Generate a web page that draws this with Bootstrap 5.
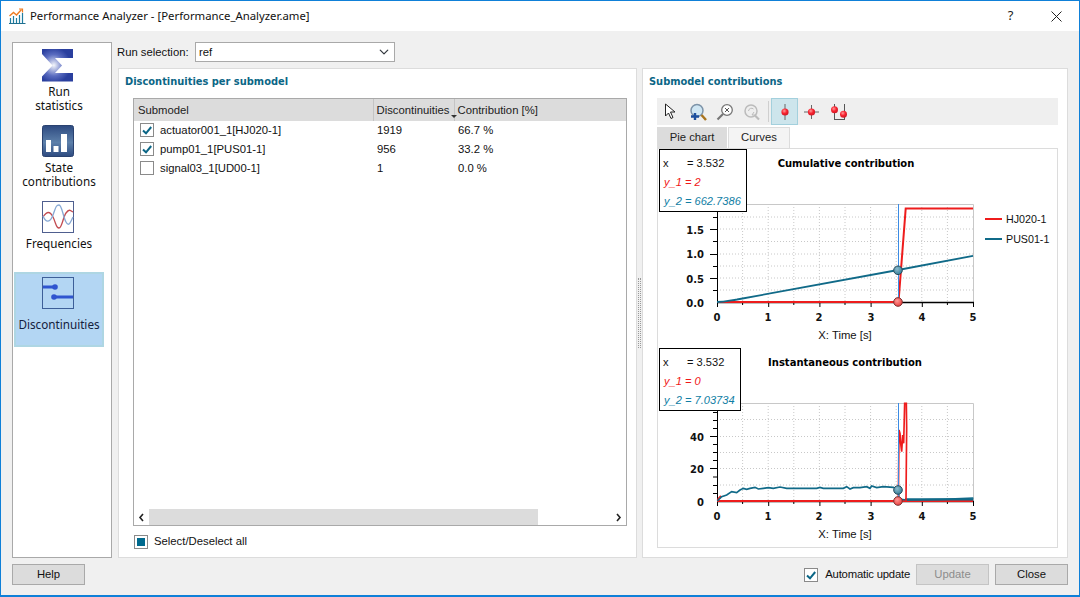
<!DOCTYPE html>
<html lang="en">
<head>
<meta charset="utf-8">
<title>Performance Analyzer</title>
<link href="https://cdn.jsdelivr.net/npm/bootstrap@5.3.0/dist/css/bootstrap.min.css" rel="stylesheet">
<script src="https://cdn.jsdelivr.net/npm/bootstrap@5.3.0/dist/js/bootstrap.bundle.min.js"></script>
<style>
html,body{margin:0;height:100%;overflow:hidden;background:#f0f0f0}
body{font-family:"Liberation Sans",sans-serif;font-size:11.3px;color:#111;line-height:1.2}
.app-win{width:1080px;height:597px;border:1px solid #0f80d8;border-bottom-width:2px;background:#f0f0f0}
.title-bar{height:30px;background:#fff;font-family:"Noto Sans",sans-serif;font-size:11.35px;padding-left:8px;color:#111}
.win-ctl{width:45px;text-align:center;font-size:13px;color:#222}
.win-close{width:46px;margin-right:0}
.work{height:526px;padding:11px 11px 0 11px;gap:6px}
.side-rail{width:100px;height:516px;background:#fff;border:1px solid #a9a9a9;padding:1px}
.rail-item{width:90px;height:75px;font-family:"Noto Sans",sans-serif;font-size:11.7px;line-height:14px;text-align:center;padding-top:5px;color:#111;margin-bottom:1px}
.rail-item svg{display:block;margin:0 auto 3px 28px}
.rail-item.first-item svg{margin-bottom:2px}
.rail-item.on{background:#b3d6f3;border:2px solid #aed6e3;color:#14213d;padding-top:3px}
.rail-item.on svg{margin:0 0 8px 26px}
.content-col{width:950px;height:516px}
.run-row{height:26px;padding-bottom:6px}
.run-label{width:78px;margin:2px 0 0 -1px}
.run-select{width:200px;height:20px;min-height:0;border:1px solid #a9a9a9;border-radius:0;padding:1px 0 0 3px;font-size:11.3px;color:#111;background-size:10px 10px;background-position:right 5px center}
.panes{height:490px}
.pane-box{background:#fff;border:1px solid #dcdcdc;height:490px}
.pane-left{width:519px;padding:0 9px 0 14px}
.pane-right{width:426px;padding:0 9px 0 14px}
.grip{width:5px}
.grip i{display:block;width:3px;height:70px;margin-left:1px;border-left:1px dotted #999;border-right:1px dotted #999}
.pane-h{font-family:"DejaVu Sans",sans-serif;font-weight:700;font-size:9.9px;color:#0b6686;height:29px;padding:7px 0 0 0;margin:0 0 0 -8px}
.grid-frame{width:494px;height:428px;border:1px solid #a9a9a9}
.grid-table{width:492px;table-layout:fixed;margin:0;--bs-table-bg:transparent;font-size:11.3px;color:#111}
.grid-table th{background:#dcdcdc;font-weight:400;height:22px;padding:1px 0 0 4px;border:0;border-right:1px solid #c4c4c4;white-space:nowrap;vertical-align:middle;color:#222}
.grid-table th:nth-child(2){padding-left:3px}
.grid-table th:last-child{border-right:0;padding-left:3px}
.grid-table td{height:19px;padding:0 0 0 4px;border:0;vertical-align:middle;white-space:nowrap}
.grid-table td.first{padding-left:6px}
.form-check-input,.form-check-input[type=checkbox]{width:14px;height:14px;border-radius:0;border:1px solid #8a8a8a;background-color:#fff;margin:0;flex:none}
.grid-table .form-check-input[type=checkbox]{margin:0 6px 0 0;vertical-align:-3px}
.form-check-input:checked{background-color:#fff;border-color:#8a8a8a;background-size:12px 12px;background-image:url("data:image/svg+xml,%3csvg xmlns='http://www.w3.org/2000/svg' viewBox='0 0 12 12'%3e%3cpath fill='none' stroke='%230b6686' stroke-width='2' d='M2 6.500 5 9.300 10.200 3'/%3e%3c/svg%3e")}
.form-check-input.part:checked{background-image:none;background-color:#006a8e;box-shadow:inset 0 0 0 2px #fff}
.sort-mark{display:inline-block;border:3px solid transparent;border-top-color:#333;border-bottom:0;margin-left:2px;vertical-align:-4px}
.scroll-strip{height:16px;padding:0 2px 0 0}
.scroll-side{width:15px;text-align:center}
.scroll-thumb{width:389px;height:16px;background:#dcdcdc}
.select-all{height:30px;gap:6px;margin-left:1px;padding-top:1px}
.tool-row{width:401px;height:27px;background:#efefef}
.tool-btn{width:27px;height:27px;border:1px solid transparent}
.tool-btn.on{background:#cde5ec;border-color:#a3d0dd}
.tool-sep{width:1px;height:21px;background:#cfcfcf;margin:0 2px 0 3px}
.tab-strip{width:401px;border:0;height:23px;padding-top:2px;gap:1px;--bs-nav-tabs-border-width:0}
.tab-strip .nav-link{font-size:11.3px;color:#222;height:21px;border-radius:0;padding:4px 0 0 0;text-align:center;background:#dcdcdc;border:0;width:70px;margin:0}
.tab-strip .nav-link.active{width:62px;background:#f4f4f4;color:#222;border:1px solid #dcdcdc;border-bottom:0;padding-top:3px}
.chart-pane{width:401px;height:400px;border:1px solid #dcdcdc;background:#fff}
.chart-pane svg{display:block}
.chart-pane text{font-family:"Liberation Sans",sans-serif;font-size:11.3px;fill:#111}
.chart-pane text.lg{font-size:10.7px}
.chart-pane text.t{font-family:"DejaVu Sans",sans-serif;font-weight:700;font-size:10px;fill:#000}
.chart-pane text.n{font-family:"DejaVu Sans",sans-serif;font-weight:700;font-size:10px;fill:#111}
.readout{position:absolute;left:1px;background:#fff;border:1px solid #000;padding:4px 0 0 3px;font-size:11.1px;line-height:19px;white-space:pre;color:#111}
.readout i{display:block;font-style:italic;padding-left:1px}
.readout .c1{color:#f01818}.readout .c2{color:#107ea4}
.foot-bar{height:38px;padding:0 11px 3px 11px}
.flat-btn{width:73px;height:21px;background:#dcdcdc;border:1px solid #a9a9a9;border-radius:0;padding:1px 0 0 0;font-size:11.3px;color:#111;line-height:1}
.flat-btn:disabled{background:#dcdcdc;border-color:#c4c4c4;color:#8c8c8c;opacity:1}
.btn-gap{margin-left:6px}
.auto-box{gap:7px;margin-right:6px;padding-top:1px}
.auto-box label{letter-spacing:-.2px}
</style>
</head>
<body>
<div class="app-win d-flex flex-column">
  <div class="title-bar d-flex align-items-center">
    <svg width="17" height="16" viewBox="0 0 17 16" class="me-1 flex-none"><path d="M0 15.500h16.500" stroke="#1f6f8f"/><path d="M1.500 15V10M4.500 15V8M7.500 15V10M10.500 15V7M13.500 15V5" stroke="#1f7da0" stroke-width="1.200" fill="none"/><path d="M.5 8 4.500 4.500l3 2.500 5-5.500" stroke="#ee7c22" stroke-width="1.400" fill="none"/><path d="M10 1h3.500V4.500" stroke="#ee7c22" stroke-width="1.200" fill="none"/></svg>
    <span>Performance Analyzer - [Performance_Analyzer.ame]</span>
    <span class="ms-auto win-ctl">?</span>
    <span class="win-ctl win-close"><svg width="11" height="11" viewBox="0 0 11 11"><path d="M.5.500l10 10M10.500.500l-10 10" stroke="#222" fill="none"/></svg></span>
  </div>
  <div class="work d-flex">
    <div class="side-rail flex-none">
      <div class="rail-item first-item">
        <svg width="32" height="33" viewBox="0 0 32 33"><defs><radialGradient id="sg" cx=".38" cy=".5" r=".55"><stop offset="0" stop-color="#f4f6fb"/><stop offset=".6" stop-color="#5a6cc0"/><stop offset="1" stop-color="#2a3f9e"/></radialGradient></defs><path fill="url(#sg)" d="M0 0h31v9H13l7 7.500-7 7.500h18v8.500H0v-5l10.500-11L0 5z"/></svg>
        Run<br>statistics
      </div>
      <div class="rail-item">
        <svg width="32" height="32" viewBox="0 0 32 32"><defs><linearGradient id="st" x1="0" y1="0" x2="0" y2="1"><stop offset="0" stop-color="#2d4a80"/><stop offset=".55" stop-color="#5d80aa"/><stop offset="1" stop-color="#2d4a80"/></linearGradient></defs><rect x=".5" y=".5" width="31" height="31" rx="2" fill="url(#st)" stroke="#2a4270"/><path fill="#fff" d="M4 14h5v12H4zM11.500 20h5v6h-5zM19 8h6v18h-6z" transform="translate(0 1)"/></svg>
        State<br>contributions
      </div>
      <div class="rail-item">
        <svg width="32" height="32" viewBox="0 0 32 32"><rect x=".5" y=".5" width="31" height="31" fill="#fff" stroke="#4f5f8f"/><path d="M1 16C5 10 8 10 11 16S14 27 17 27 21 16 24 12 28 9 31 11" fill="none" stroke="#c24a50" stroke-width="1.300"/><path d="M1 15C4 22 8 22 11 14S14 4 17 4 21 16 24 21 28 22 31 16" fill="none" stroke="#86a8d4" stroke-width="1.300"/></svg>
        Frequencies
      </div>
      <div class="rail-item on">
        <svg width="32" height="32" viewBox="0 0 32 32"><rect x=".5" y=".5" width="31" height="31" fill="none" stroke="#3d5f98"/><path d="M1 10h12M11 20h20" stroke="#2f55cf" stroke-width="3"/><circle cx="13" cy="10" r="2.800" fill="#2f55cf"/><circle cx="12" cy="20" r="2.800" fill="#2f55cf"/></svg>
        Discontinuities
      </div>
    </div>
    <div class="content-col d-flex flex-column flex-none">
      <div class="run-row d-flex align-items-center">
        <label class="run-label flex-none" for="runsel">Run selection:</label>
        <select class="form-select run-select" id="runsel"><option>ref</option></select>
      </div>
      <div class="panes d-flex">
        <div class="pane-box pane-left d-flex flex-column flex-none">
          <h6 class="pane-h">Discontinuities per submodel</h6>
          <div class="grid-frame d-flex flex-column">
            <table class="table grid-table">
              <colgroup><col style="width:239px"><col style="width:81px"><col></colgroup>
              <thead><tr><th>Submodel</th><th>Discontinuities<span class="sort-mark"></span></th><th>Contribution [%]</th></tr></thead>
              <tbody>
                <tr><td class="first"><input class="form-check-input" type="checkbox" checked aria-label="select">actuator001_1[HJ020-1]</td><td>1919</td><td>66.7 %</td></tr>
                <tr><td class="first"><input class="form-check-input" type="checkbox" checked aria-label="select">pump01_1[PUS01-1]</td><td>956</td><td>33.2 %</td></tr>
                <tr><td class="first"><input class="form-check-input" type="checkbox" aria-label="select">signal03_1[UD00-1]</td><td>1</td><td>0.0 %</td></tr>
              </tbody>
            </table>
            <div class="scroll-strip d-flex align-items-center mt-auto">
              <div class="scroll-side d-flex justify-content-center"><svg width="12" height="9" viewBox="0 0 12 9"><path d="M7 1 4 4.500 7 8" fill="none" stroke="#222" stroke-width="1.600"/></svg></div>
              <div class="scroll-thumb"></div>
              <svg class="ms-auto" width="12" height="9" viewBox="0 0 12 9"><path d="M5 1 8 4.500 5 8" fill="none" stroke="#222" stroke-width="1.600"/></svg>
            </div>
          </div>
          <div class="select-all d-flex align-items-center">
            <input class="form-check-input part" type="checkbox" checked id="allsel"><label for="allsel">Select/Deselect all</label>
          </div>
        </div>
        <div class="grip d-flex align-items-center flex-none"><i></i></div>
        <div class="pane-box pane-right d-flex flex-column flex-none">
          <h6 class="pane-h">Submodel contributions</h6>
          <div class="tool-row d-flex align-items-center">
            <span class="tool-btn d-flex align-items-center justify-content-center"><svg width="13" height="17" viewBox="0 0 13 17"><path d="M1.500 1v12l3-3 2.500 5.500 2-1L6.500 9H11z" fill="#fff" stroke="#222"/></svg></span>
            <span class="tool-btn d-flex align-items-center justify-content-center"><svg width="18" height="18" viewBox="0 0 18 18"><circle cx="8" cy="7.500" r="6" fill="#cfe6f3" stroke="#7d93a8" stroke-width="1.500"/><path d="M12.500 12l4.500 5" stroke="#a8741e" stroke-width="2.500"/><path d="M2 13.500h8M6 10v7" stroke="#1c4f9e" stroke-width="2.400"/></svg></span>
            <span class="tool-btn d-flex align-items-center justify-content-center"><svg width="18" height="18" viewBox="0 0 18 18"><circle cx="11" cy="7" r="5.300" fill="#fff" stroke="#777" stroke-width="1.300"/><path d="M7 11 1.500 16.500" stroke="#777" stroke-width="2.200"/><path d="M9 5l4 4M13 5 9 9" stroke="#555"/></svg></span>
            <span class="tool-btn d-flex align-items-center justify-content-center"><svg width="18" height="18" viewBox="0 0 18 18"><circle cx="8" cy="8" r="6" fill="#eee" stroke="#bbb" stroke-width="1.500"/><path d="M12 12.500l4 4" stroke="#bbb" stroke-width="2.200"/><path d="M5.500 8a3 3 0 0 1 5-2M11 9l-2 3h3" fill="none" stroke="#bbb"/></svg></span>
            <span class="tool-sep"></span>
            <span class="tool-btn on d-flex align-items-center justify-content-center"><svg width="14" height="18" viewBox="0 0 14 18"><defs><radialGradient id="pin" cx=".4" cy=".35" r=".7"><stop offset="0" stop-color="#ff9a9a"/><stop offset=".5" stop-color="#f8222f"/><stop offset="1" stop-color="#c81825"/></radialGradient></defs><path d="M7 1v16" stroke="#666"/><circle cx="7" cy="9" r="3.600" fill="url(#pin)"/></svg></span>
            <span class="tool-btn d-flex align-items-center justify-content-center"><svg width="17" height="18" viewBox="0 0 17 18"><path d="M8.500 2v14M1 9h15" stroke="#666"/><circle cx="8.500" cy="9" r="3.600" fill="url(#pin)"/></svg></span>
            <span class="tool-btn d-flex align-items-center justify-content-center"><svg width="18" height="18" viewBox="0 0 18 18"><path d="M4.500 1v16M14.500 1v16M4 16.500h11" stroke="#555"/><circle cx="4.500" cy="6.800" r="3.500" fill="url(#pin)"/><circle cx="13.500" cy="11.200" r="3.500" fill="url(#pin)"/></svg></span>
          </div>
          <ul class="nav nav-tabs tab-strip">
            <li class="nav-item"><a class="nav-link" href="#">Pie chart</a></li>
            <li class="nav-item"><a class="nav-link active" href="#">Curves</a></li>
          </ul>
          <div class="chart-pane position-relative">
            <svg width="399" height="398" viewBox="658 149 399 398">
              <defs>
                <radialGradient id="mt" cx=".4" cy=".35" r=".7"><stop offset="0" stop-color="#8fbccd"/><stop offset="1" stop-color="#2f7a96"/></radialGradient>
                <radialGradient id="mr" cx=".4" cy=".35" r=".7"><stop offset="0" stop-color="#ff9a96"/><stop offset="1" stop-color="#e93a3a"/></radialGradient>
              </defs>
              <text class="t" x="846" y="167" text-anchor="middle">Cumulative contribution</text>
              <path d="M742.600 204V302M768.200 204V302M793.800 204V302M819.400 204V302M845 204V302M870.600 204V302M896.200 204V302M921.800 204V302M947.400 204V302M717 290H973M717 278H973M717 266H973M717 254H973M717 241.500H973M717 229H973M717 217H973" stroke="#c8c8c8" stroke-dasharray="1 2" fill="none"/>
              <path d="M717 204.500H973.500V302" stroke="#c8c8c8" fill="none"/>
              <path d="M717 302.500H974" stroke="#000" stroke-width="1.500"/><path d="M717.500 204V307M768.700 302V307M819.900 302V307M871.100 302V307M922.300 302V307M973.500 302V307" stroke="#000"/>
              <path d="M742.600 302V305M793.800 302V305M845 302V305M896.200 302V305M947.400 302V305M713 290.500H717M710 278.500H717M713 266.500H717M710 254.500H717M713 241.500H717M710 229.500H717M713 217.500H717M713 205.500H717" stroke="#000"/>
              <text class="n" x="704" y="307" text-anchor="end">0.0</text><text class="n" x="704" y="283" text-anchor="end">0.5</text><text class="n" x="704" y="258" text-anchor="end">1.0</text><text class="n" x="704" y="234" text-anchor="end">1.5</text>
              <text class="n" x="717" y="321" text-anchor="middle">0</text><text class="n" x="768" y="321" text-anchor="middle">1</text><text class="n" x="819" y="321" text-anchor="middle">2</text><text class="n" x="871" y="321" text-anchor="middle">3</text><text class="n" x="922" y="321" text-anchor="middle">4</text><text class="n" x="973" y="321" text-anchor="middle">5</text>
              <text x="845" y="339" text-anchor="middle">X: Time [s]</text>
              <path d="M717 302H898.500L905.700 208.500H973" fill="none" stroke="#ee1c1c" stroke-width="2"/>
              <path d="M717 302C725 302 730 300.500 737 299.500L898 270L973 255.800" fill="none" stroke="#106a88" stroke-width="1.800"/>
              <path d="M898.500 204V302" stroke="#3b8be4"/>
              <circle cx="898" cy="270.300" r="4.300" fill="url(#mt)" stroke="#274a5a"/>
              <circle cx="898" cy="302" r="4.300" fill="url(#mr)" stroke="#7c3030"/>
              <path d="M985 219H1002" stroke="#ee1c1c" stroke-width="2"/><path d="M985 239H1002" stroke="#106a88" stroke-width="2"/>
              <text class="lg" x="1006" y="223">HJ020-1</text><text class="lg" x="1006" y="243">PUS01-1</text>

              <text class="t" x="845" y="366" text-anchor="middle">Instantaneous contribution</text>
              <path d="M742.600 403V501M768.200 403V501M793.800 403V501M819.400 403V501M845 403V501M870.600 403V501M896.200 403V501M921.800 403V501M947.400 403V501M717 485H973M717 468.500H973M717 452.500H973M717 436.500H973M717 419.500H973" stroke="#c8c8c8" stroke-dasharray="1 2" fill="none"/>
              <path d="M717 403.500H973.500V501" stroke="#c8c8c8" fill="none"/>
              <path d="M717 501.500H974" stroke="#000" stroke-width="1.500"/><path d="M717.500 403V506M768.700 501V506M819.900 501V506M871.100 501V506M922.300 501V506M973.500 501V506" stroke="#000"/>
              <path d="M742.600 501V504M793.800 501V504M845 501V504M896.200 501V504M947.400 501V504M713 493.500H717M713 485.500H717M713 477H717M710 468.500H717M713 460.500H717M713 452.500H717M713 444.500H717M710 436.500H717M713 428.500H717M713 420.500H717M713 412.500H717" stroke="#000"/>
              <text class="n" x="704" y="506" text-anchor="end">0</text><text class="n" x="704" y="473" text-anchor="end">20</text><text class="n" x="704" y="441" text-anchor="end">40</text>
              <text class="n" x="717" y="520" text-anchor="middle">0</text><text class="n" x="768" y="520" text-anchor="middle">1</text><text class="n" x="819" y="520" text-anchor="middle">2</text><text class="n" x="871" y="520" text-anchor="middle">3</text><text class="n" x="922" y="520" text-anchor="middle">4</text><text class="n" x="973" y="520" text-anchor="middle">5</text>
              <text x="845" y="538" text-anchor="middle">X: Time [s]</text>
              <path d="M717 501H973" stroke="#ee1c1c" stroke-width="1.800"/>
              <path d="M717.500 500 721 496" stroke="#ee1c1c" stroke-width="2"/>
              <g transform="translate(650 345) scale(.33333)" fill="none">
                <path d="M202 468 215 455 230 450 245 440 260 443 270 435 280 430 290 433 300 430 315 427 325 432 340 430 355 428 370 430 390 426 410 430 500 430 510 427 520 430 580 430 590 425 600 432 610 428 630 428 650 425 660 430 665 423 680 428 700 425 730 427 745 435 747 462 770 465 840 464 880 463 970 459" stroke="#106a88" stroke-width="5"/>
                <path d="M765 463H970" stroke="#106a88" stroke-width="7"/>
                <path d="M745 468 747 255 750 265 752 295 755 320 758 270 761 295 764 175 769 175 770 250 768 468" stroke="#ee1c1c" stroke-width="5"/>
              </g>
              <path d="M898.500 403V501" stroke="#3b8be4"/>
              <circle cx="898" cy="490" r="4.300" fill="url(#mt)" stroke="#274a5a"/>
              <circle cx="898" cy="501" r="4.300" fill="url(#mr)" stroke="#7c3030"/>
            </svg>
            <div class="readout" style="top:0;width:88px;height:63px">x      = 3.532<i class="c1">y_1 = 2</i><i class="c2">y_2 = 662.7386</i></div>
            <div class="readout" style="top:199px;width:82px;height:63px">x      = 3.532<i class="c1">y_1 = 0</i><i class="c2">y_2 = 7.03734</i></div>
          </div>
        </div>
      </div>
    </div>
  </div>
  <div class="foot-bar d-flex align-items-center">
    <button class="btn flat-btn" type="button">Help</button>
    <div class="auto-box d-flex align-items-center ms-auto"><input class="form-check-input" type="checkbox" checked id="autoup"><label for="autoup">Automatic update</label></div>
    <button class="btn flat-btn" type="button" disabled>Update</button>
    <button class="btn flat-btn btn-gap" type="button">Close</button>
  </div>
</div>
</body>
</html>
